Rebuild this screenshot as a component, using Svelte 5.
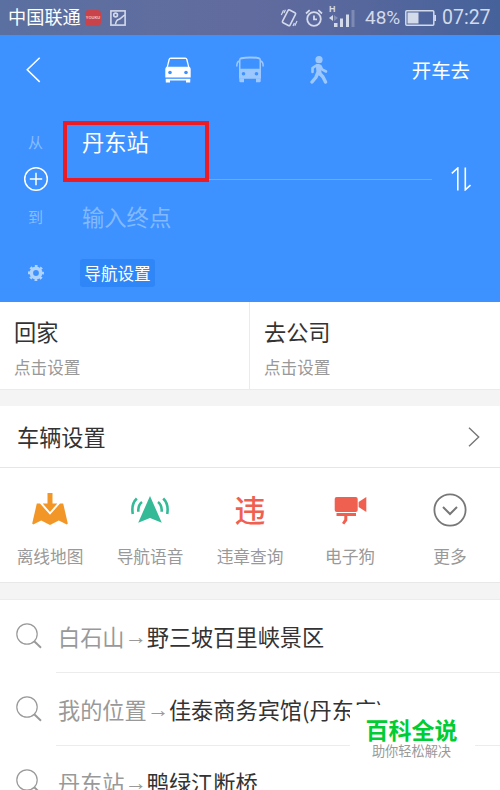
<script lang="ts">
	// Route planner screen: route form, shortcuts, vehicle tools and search history

	interface Shortcut {
		title: string;
		hint: string;
	}

	interface Tool {
		icon: 'map' | 'voice' | 'violation' | 'camera' | 'more';
		label: string;
	}

	interface HistoryItem {
		from: string;
		to: string;
	}

	const shortcuts: Shortcut[] = [
		{ title: '回家', hint: '点击设置' },
		{ title: '去公司', hint: '点击设置' }
	];

	const tools: Tool[] = [
		{ icon: 'map', label: '离线地图' },
		{ icon: 'voice', label: '导航语音' },
		{ icon: 'violation', label: '违章查询' },
		{ icon: 'camera', label: '电子狗' },
		{ icon: 'more', label: '更多' }
	];

	const history: HistoryItem[] = [
		{ from: '白石山', to: '野三坡百里峡景区' },
		{ from: '我的位置', to: '佳泰商务宾馆(丹东店)' },
		{ from: '丹东站', to: '鸭绿江断桥' }
	];

	let mode = $state<'car' | 'bus' | 'walk'>('car');
	let from = $state('丹东站');
	let to = $state('');

	function swapRoute() {
		[from, to] = [to, from];
	}
</script>

<div class="screen">
	<div class="status">
		<span class="carrier">中国联通</span>
		<span class="news">YOUKU</span>
		<svg class="picture" width="16" height="16" viewBox="0 0 16 16" fill="none" stroke="currentColor" stroke-width="1.6">
			<rect x="0.9" y="0.9" width="14.2" height="14.2" />
			<circle cx="5.6" cy="5" r="1.9" />
			<path d="M5.500 14.500C6 11 7 9.800 8.500 9.500C11.500 9 12 6 15 5" />
		</svg>

		<svg class="vibrate" width="18" height="20" viewBox="0 0 18 20" fill="none" stroke="currentColor">
			<rect x="4.700" y="2.600" width="8.400" height="14.400" rx="1.200" stroke-width="1.600" transform="rotate(27 9 10)" />
			<path d="M1.300 7l2.200-4.800M4 5l1.400-3.200M13 18l1.400-3M14.800 17.800l2.200-4.800" stroke-width="1.200" />
		</svg>
		<svg class="alarm" width="18" height="18" viewBox="0 0 18 18" fill="none" stroke="currentColor" stroke-width="1.800">
			<circle cx="9" cy="10" r="6.800" />
			<path d="M9 6.500V10.300H12M1 4.500L4.700 1.200M17 4.500L13.300 1.200" />
		</svg>
		<div class="signal">
			<span class="network">H</span>
			<svg width="26" height="20" viewBox="0 0 26 20" fill="currentColor">
				<path d="M0 10l4-3v6z" />
				<path d="M5 7l4 3-4 3z" opacity="0.35" />
				<rect x="5" y="15" width="3.500" height="4" />
				<rect x="11" y="10.500" width="3" height="8.500" />
				<rect x="17" y="6.500" width="3" height="12.500" />
				<rect x="22.500" y="2" width="3" height="17" opacity="0.3" />
			</svg>
		</div>
		<span class="percent">48%</span>
		<svg class="battery" width="31" height="16" viewBox="0 0 31 16">
			<rect x="0.800" y="0.800" width="28" height="14.400" rx="1" fill="none" stroke="currentColor" stroke-width="1.500" />
			<rect x="2.500" y="2.500" width="11" height="11" fill="currentColor" />
			<rect x="29.200" y="5" width="1.800" height="6" fill="currentColor" />
		</svg>
		<span class="clock">07:27</span>
	</div>

	<header>
		<div class="nav">
			<button class="back" type="button" aria-label="返回">
				<svg width="15" height="26" viewBox="0 0 15 26" fill="none" stroke="currentColor" stroke-width="1.500">
					<path d="M13.700 0.800L1.200 12.700L13.700 24.900" />
				</svg>
			</button>
			<div class="modes">
				<button type="button" class:active={mode === 'car'} onclick={() => (mode = 'car')} aria-label="驾车">
					<svg width="26" height="26" viewBox="0 0 26 26">
						<path d="M5.800 0.500H20.200Q22 0.500 22.500 2.200L24.200 9.500Q25.700 10.500 25.700 12V20.500H0.300V12Q0.300 10.500 1.800 9.500L3.500 2.200Q4 0.500 5.800 0.500Z" fill="currentColor" />
						<path d="M5 2H21L23 9.700H3Z" fill="#3d92ff" />
						<rect x="0.800" y="21.800" width="24.400" height="1.700" fill="currentColor" />
						<path d="M0.800 22.500H5V25.500H0.800ZM21 22.500H25.200V25.500H21Z" fill="currentColor" />
						<circle cx="5" cy="15.500" r="1.800" fill="#3d92ff" />
						<circle cx="21" cy="15.500" r="1.800" fill="#3d92ff" />
					</svg>
				</button>
				<button type="button" class:active={mode === 'bus'} onclick={() => (mode = 'bus')} aria-label="公交">
					<svg width="28" height="27" viewBox="0 0 28 27">
						<path d="M3 4Q3 1.800 5 1.300Q14-0.500 23 1.300Q25 1.800 25 4V22.800H3Z" fill="currentColor" />
						<path d="M4.500 3.500Q14 1.300 23.500 3.500V12.800H4.500Z" fill="#3d92ff" />
						<path d="M3.500 5Q0.800 5.500 0.800 10.500M24.500 5Q27.200 5.500 27.200 10.500" fill="none" stroke="currentColor" stroke-width="1.500" />
						<path d="M3.300 22.500H8V26.300H4.500Q3.300 26.300 3.300 25ZM20 22.500H24.700V25Q24.700 26.300 23.500 26.300H20Z" fill="currentColor" />
						<circle cx="7.500" cy="17.700" r="1.800" fill="#3d92ff" />
						<circle cx="20.500" cy="17.700" r="1.800" fill="#3d92ff" />
					</svg>
				</button>
				<button type="button" class:active={mode === 'walk'} onclick={() => (mode = 'walk')} aria-label="步行">
					<svg width="18" height="28" viewBox="0 0 18 28" fill="none" stroke="currentColor" stroke-linecap="round" stroke-linejoin="round">
						<circle cx="9" cy="3.700" r="3.600" fill="currentColor" stroke="none" />
						<path d="M8.500 10.500L9 17" stroke-width="5" />
						<path d="M7 9L2.500 12V16" stroke-width="2.600" />
						<path d="M10.500 10L12 13.300L16 15.500" stroke-width="2.600" />
						<path d="M7.500 17.500L5.800 21.500L2 26" stroke-width="3.400" />
						<path d="M9.800 17.500L13 21L15.500 26" stroke-width="3.400" />
					</svg>
				</button>
			</div>
			<button class="go" type="button">开车去</button>
		</div>

		<div class="route">
			<div class="field start">
				<span class="tag">从</span>
				<span class="value" class:empty={!from}>{from || '输入起点'}</span>
			</div>
			<div class="divider">
				<svg class="plus" width="26" height="26" viewBox="0 0 26 26" fill="none" stroke="currentColor" stroke-width="1.500">
					<circle cx="13" cy="13" r="11.300" />
					<path d="M13 6.800V19.200M6.800 13H19.200" />
				</svg>
				<span class="line"></span>
				<button class="swap" type="button" onclick={swapRoute} aria-label="交换起点和终点">
					<svg width="20" height="24" viewBox="0 0 20 24" fill="none" stroke="currentColor" stroke-width="1.600">
						<path d="M0.800 6.300L6.800 1V23.500M14.300 0.500V22.800L19.500 18" />
					</svg>
				</button>
			</div>
			<div class="field">
				<span class="tag">到</span>
				<span class="value" class:empty={!to}>{to || '输入终点'}</span>
			</div>
			<div class="marker"></div>
		</div>

		<div class="settings">
			<svg width="16" height="16" viewBox="0 0 16 16">
				<circle cx="8" cy="8" r="4.700" fill="none" stroke="currentColor" stroke-width="3.600" />
				<circle cx="8" cy="8" r="6.800" fill="none" stroke="currentColor" stroke-width="2.400" stroke-dasharray="2.670 2.670" stroke-dashoffset="1.300" />
			</svg>
			<button type="button">导航设置</button>
		</div>
	</header>

	<div class="shortcuts">
		{#each shortcuts as item}
			<div class="shortcut">
				<div class="title">{item.title}</div>
				<div class="hint">{item.hint}</div>
			</div>
		{/each}
	</div>

	<div class="vehicle">
		<span>车辆设置</span>
		<svg width="12" height="20" viewBox="0 0 12 20" fill="none" stroke="#777" stroke-width="1.400">
			<path d="M1 0.700L10.700 10L1 19.300" />
		</svg>
	</div>

	<div class="tools">
		{#each tools as tool}
			<div class="tool">
				<div class="icon">
					{#if tool.icon === 'map'}
						<svg width="37" height="36" viewBox="0 0 37 36" fill="#f29727">
							<path d="M4.800 11.500H8L18 22.800L28 11.500H31.200L35.800 31.500L34.800 32.500L26.800 28.500L18 33L9.200 28.500L1.200 32.500L0.200 31.500Z" />
							<path d="M15.500 1H20.500V11.500H25.300L18 20L10.700 11.500H15.500Z" />
						</svg>
					{:else if tool.icon === 'voice'}
						<svg width="38" height="36" viewBox="0 0 38 36" fill="none" stroke="#35ba98" stroke-width="2.600">
							<path d="M19 4L30.800 30.700L19 26L7.200 30.700Z" fill="#35ba98" stroke="none" />
							<path d="M11 10Q7 13 7.300 19.700M5.800 6.500Q0 12 1.800 22M27 10Q31 13 30.700 19.700M32.200 6.500Q38 12 36.200 22" />
						</svg>
					{:else if tool.icon === 'violation'}
						<span class="violation">违</span>
					{:else if tool.icon === 'camera'}
						<svg width="33" height="36" viewBox="0 0 33 36" fill="#f06050">
							<rect x="0.700" y="5" width="23" height="15" rx="2" />
							<path d="M24.600 10L32.300 5V20L24.600 15Z" />
							<path d="M2.500 21H22V24H13.300V28.500L10.300 32.500L8 31L10.300 27.500V24H2.500Z" />
						</svg>
					{:else}
						<svg width="34" height="34" viewBox="0 0 34 34" fill="none" stroke="#777" stroke-width="1.800">
							<circle cx="17" cy="17" r="15.600" />
							<path d="M10 14L17 21L24 14" stroke-width="2" />
						</svg>
					{/if}
				</div>
				<div class="label">{tool.label}</div>
			</div>
		{/each}
	</div>

	<div class="history">
		{#each history as item}
			<div class="entry">
				<svg width="26" height="26" viewBox="0 0 26 26" fill="none" stroke="#999">
					<circle cx="11" cy="11" r="10.200" stroke-width="1.200" />
					<path d="M18.200 18.200L25 24.700" stroke-width="1.900" />
				</svg>
				<div class="trip">
					<span class="from">{item.from}</span><span class="arrow">→</span><span class="to">{item.to}</span>
				</div>
			</div>
		{/each}
	</div>

	<div class="badge">
		<div class="brand">百科全说</div>
		<div class="slogan">助你轻松解决</div>
	</div>
</div>

<style>
	:global(body) {
		margin: 0;
		overflow: hidden;
	}

	.screen {
		position: relative;
		width: 500px;
		height: 790px;
		overflow: hidden;
		box-sizing: border-box;
		background: #f4f4f4;
		color: #333;
		font-family: 'Noto Sans CJK SC', sans-serif;
	}

	svg {
		display: block;
		flex: none;
	}

	button {
		display: block;
		flex: none;
		margin: 0;
		padding: 0;
		border: none;
		background: none;
		color: inherit;
		font: inherit;
	}

	/* Status bar */
	.status {
		display: flex;
		align-items: center;
		height: 35px;
		box-sizing: border-box;
		padding-left: 8px;
		background: linear-gradient(to right, #5a70a0, #626b9e 50%, #46629b);
		color: #d3daea;
		white-space: nowrap;
	}

	.carrier {
		width: 73px;
		color: #fff;
		font-size: 18.200px;
		line-height: 32px;
		height: 35px;
	}

	.news {
		display: flex;
		align-items: center;
		justify-content: center;
		width: 16px;
		height: 16px;
		margin-left: 4px;
		border-radius: 4px;
		background: #c9434b;
		color: #f3c6ca;
		font: bold 4px 'Liberation Sans', sans-serif;
	}

	.picture {
		margin-left: 9px;
	}

	.vibrate {
		margin-left: 154px;
	}

	.alarm {
		margin-left: 7px;
	}

	.signal {
		display: flex;
		flex-direction: column;
		width: 26px;
		height: 22px;
		margin: 0 0 2px 6px;
	}

	.network {
		height: 2px;
		font: bold 9px/7px 'Liberation Sans', sans-serif;
	}

	.percent {
		width: 37px;
		margin-left: 10px;
		font: 19px/37px Roboto, sans-serif;
	}

	.battery {
		margin-left: 3px;
	}

	.clock {
		margin-left: 6px;
		font: 19.500px/37px Roboto, sans-serif;
	}

	/* Route form */
	header {
		height: 267px;
		background: #3d92ff;
		color: #fff;
	}

	.nav {
		display: flex;
		align-items: center;
		height: 69px;
		padding: 0 30px 0 26px;
	}

	.modes {
		display: flex;
		flex: 1;
		align-items: center;
		padding-left: 124px;
	}

	.modes button {
		color: #9dc8ff;
	}

	.modes button + button {
		margin-left: 45px;
	}

	.modes button:last-child {
		margin-left: 46px;
	}

	.modes .active {
		color: #fff;
	}

	.go {
		font-size: 19.400px;
		line-height: 28px;
	}

	.route {
		position: relative;
		height: 138px;
		padding-top: 14px;
		box-sizing: border-box;
	}

	.field {
		display: flex;
		align-items: center;
		height: 48px;
		padding-left: 28px;
	}

	.field.start {
		height: 46px;
		padding-bottom: 2px;
	}

	.tag {
		width: 54px;
		color: #8abcff;
		font-size: 15px;
	}

	.value {
		font-size: 22.300px;
		line-height: 46px;
	}

	.value.empty {
		color: #83b9ff;
	}

	.divider {
		display: flex;
		align-items: center;
		height: 26px;
		padding-left: 23px;
	}

	.line {
		width: 352px;
		height: 1px;
		margin-left: 31px;
		background: #69abff;
	}

	.swap {
		margin-left: 19px;
	}

	/* Highlight frame laid over the start field */
	.marker {
		position: absolute;
		left: 63px;
		top: 17px;
		width: 146px;
		height: 61px;
		box-sizing: border-box;
		border: 4px solid #ec1c24;
	}

	.settings {
		display: flex;
		align-items: center;
		height: 61px;
		padding-left: 28px;
	}

	.settings svg {
		color: #b0d3ff;
	}

	.settings button {
		width: 75px;
		height: 28px;
		margin-left: 36px;
		border-radius: 3px;
		background: #2f86f7;
		font-size: 16.600px;
		line-height: 28px;
	}

	/* Home and company shortcuts */
	.shortcuts {
		display: flex;
		height: 87px;
		background: #fff;
		border-bottom: 1px solid #ebebeb;
	}

	.shortcut {
		width: 250px;
		box-sizing: border-box;
		padding: 11px 0 0 14px;
	}

	.shortcut:first-child {
		border-right: 1px solid #ebebeb;
	}

	.title {
		font-size: 22.200px;
		line-height: 36px;
	}

	.hint {
		margin-top: 6px;
		color: #999;
		font-size: 16.600px;
		line-height: 24px;
	}

	/* Vehicle settings */
	.vehicle {
		display: flex;
		align-items: center;
		justify-content: space-between;
		height: 61px;
		margin-top: 16px;
		padding: 0 20px 0 17px;
		background: #fff;
		border-bottom: 1px solid #e6e6e6;
		font-size: 22.200px;
	}

	.vehicle span {
		height: 60px;
		line-height: 58px;
	}

	.tools {
		display: flex;
		height: 115px;
		background: #fff;
		border-bottom: 1px solid #e8e8e8;
		box-sizing: border-box;
	}

	.tool {
		display: flex;
		flex: 1;
		flex-direction: column;
		align-items: center;
		padding-top: 24px;
	}

	.icon {
		display: flex;
		align-items: center;
		justify-content: center;
		height: 36px;
	}

	.violation {
		height: 36px;
		color: #f06050;
		font-size: 31px;
		font-weight: 500;
		line-height: 33px;
	}

	.label {
		margin-top: 16px;
		color: #999;
		font-size: 16.700px;
		line-height: 24px;
	}

	/* Search history */
	.history {
		margin-top: 16px;
		background: #fff;
		border-top: 1px solid #ececec;
	}

	.entry {
		display: flex;
		align-items: center;
		height: 73px;
		padding-left: 16px;
	}

	.entry svg {
		margin-bottom: 2px;
	}

	.trip {
		display: flex;
		flex: 1;
		height: 71px;
		margin-left: 14px;
		padding-left: 2px;
		border-bottom: 1px solid #ececec;
		font-size: 22.200px;
		line-height: 71px;
		white-space: nowrap;
	}

	.from,
	.arrow {
		color: #999;
	}

	.arrow {
		font-family: 'Liberation Serif', serif;
	}

	/* Floating badge over the list */
	.badge {
		position: absolute;
		left: 350px;
		top: 705px;
		width: 125px;
		height: 85px;
		box-sizing: border-box;
		padding: 8px 2px 0 0;
		background: #fff;
		text-align: center;
		white-space: nowrap;
	}

	.brand {
		color: #0c3;
		font-size: 23px;
		font-weight: 700;
		line-height: 32px;
	}

	.slogan {
		margin-top: -3px;
		color: #999;
		font-size: 13.200px;
		line-height: 18px;
	}
</style>
